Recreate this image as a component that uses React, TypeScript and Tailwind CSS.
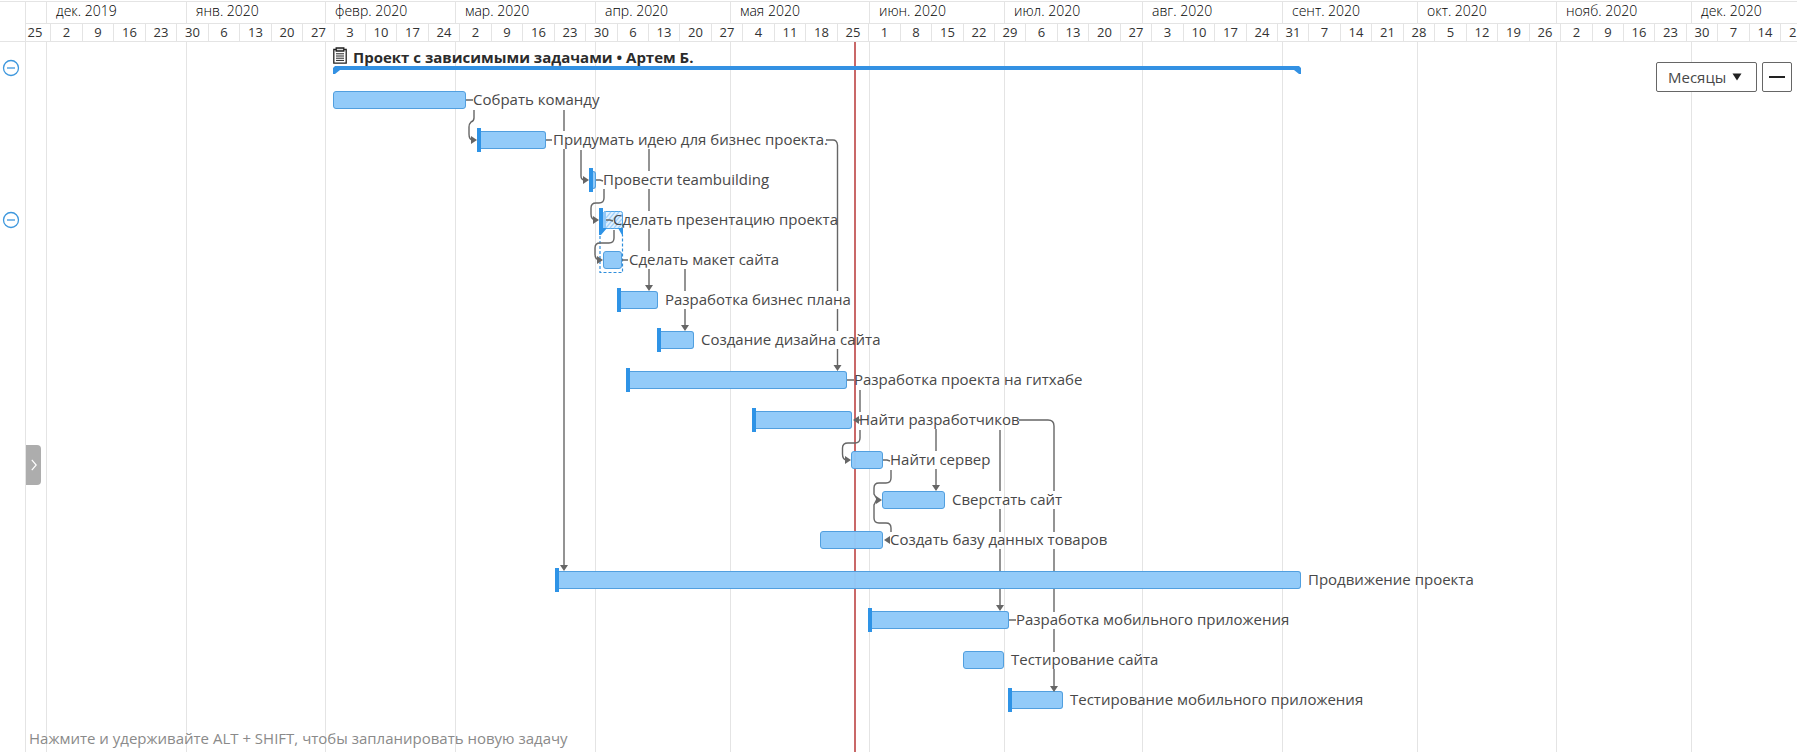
import React from "react";

type Month = { label: string; width: number };

const MONTHS: Month[] = [
  { label: "дек. 2019", width: 140 },
  { label: "янв. 2020", width: 139 },
  { label: "февр. 2020", width: 130 },
  { label: "мар. 2020", width: 140 },
  { label: "апр. 2020", width: 135 },
  { label: "мая 2020", width: 139 },
  { label: "июн. 2020", width: 135 },
  { label: "июл. 2020", width: 138 },
  { label: "авг. 2020", width: 140 },
  { label: "сент. 2020", width: 135 },
  { label: "окт. 2020", width: 139 },
  { label: "нояб. 2020", width: 135 },
  { label: "дек. 2020", width: 140 },
];

const WEEKS = [
  25, 2, 9, 16, 23, 30, 6, 13, 20, 27, 3, 10, 17, 24, 2, 9, 16, 23, 30, 6, 13, 20, 27, 4, 11, 18, 25, 1, 8,
  15, 22, 29, 6, 13, 20, 27, 3, 10, 17, 24, 31, 7, 14, 21, 28, 5, 12, 19, 26, 2, 9, 16, 23, 30, 7, 14, 21,
];
const WEEK_WIDTH = 31.45;
const weekWidth = (i: number) => Math.round((i + 1) * WEEK_WIDTH) - Math.round(i * WEEK_WIDTH);

type Task = { name: string; start: number; width: number; flag?: boolean; group?: boolean };

const TASKS: Task[] = [
  { name: "Собрать команду", start: 307, width: 133 },
  { name: "Придумать идею для бизнес проекта.", start: 451, width: 69, flag: true },
  { name: "Провести teambuilding", start: 563, width: 7, flag: true },
  { name: "Сделать презентацию проекта", start: 573, width: 24, flag: true, group: true },
  { name: "Сделать макет сайта", start: 577, width: 19 },
  { name: "Разработка бизнес плана", start: 591, width: 41, flag: true },
  { name: "Создание дизайна сайта", start: 631, width: 37, flag: true },
  { name: "Разработка проекта на гитхабе", start: 600, width: 221, flag: true },
  { name: "Найти разработчиков", start: 726, width: 100, flag: true },
  { name: "Найти сервер", start: 825, width: 32 },
  { name: "Сверстать сайт", start: 856, width: 63 },
  { name: "Создать базу данных товаров", start: 794, width: 63 },
  { name: "Продвижение проекта", start: 529, width: 746, flag: true },
  { name: "Разработка мобильного приложения", start: 842, width: 141, flag: true },
  { name: "Тестирование сайта", start: 937, width: 41 },
  { name: "Тестирование мобильного приложения", start: 982, width: 55, flag: true },
];

const LINKS = [
  "M466 100H473",
  "M474 110V118Q474 121 471 122Q469 124 469 127V134Q469 140 473 140",
  "M546 140H552",
  "M564 110V131M564 149V567",
  "M581 150V176Q581 180 585 180",
  "M596 180H600L603 181",
  "M604 189V198Q604 203 599 203H596Q591 203 591 208V214Q591 220 596 220",
  "M606 220H610L613 221",
  "M614 230V238Q614 243 609 243H600Q595 243 595 248V254Q595 260 600 260",
  "M622 260H628",
  "M649 149V171M649 189V211M649 229V251M649 269V286",
  "M685 269V291M685 309V326",
  "M826 140H833Q837 140 837.5 145V291M837.5 309V331M837.5 349V366",
  "M847 380H854",
  "M860 390V412M860 430V438Q860 443 855 443H848Q842.5 443 842.5 448V454Q842.5 460 847 460",
  "M857 420H861",
  "M1019 420H1048Q1054 420 1054 426V491M1054 509V532M1054 549V571M1054 589V612M1054 629V652M1054 669V687",
  "M936 429V451M936 469V486",
  "M1000 430V491M1000 509V532M1000 549V571M1000 589V606",
  "M883 460H887L890 461",
  "M891 470V478Q891 483 886 483H879Q874 483 874 488V494L877 499L874 505V518Q874 523 879 523H886Q891 523 891 528V532",
  "M887 540H890",
  "M1009 620H1016",
];

const ARROWS = [
  "M477 140L471 136V144Z",
  "M589 180L583 176V184Z",
  "M599 220L593 216V224Z",
  "M603 260L597 256V264Z",
  "M851 460L845 456V464Z",
  "M882 500L876 496V504Z",
  "M853 420L859 416V424Z",
  "M884 540L890 536V544Z",
  "M564 571L560 565H568Z",
  "M649 291L645 285H653Z",
  "M685 331L681 325H689Z",
  "M837.5 371L833.5 365H841.5Z",
  "M936 491L932 485H940Z",
  "M1000 611L996 605H1004Z",
  "M1054 692L1050 686H1058Z",
];

function Header() {
  return (
    <header className="mt-px flex h-[41px] border-b border-t border-[#e4e4e4] bg-white">
      <div className="w-[26px] shrink-0 border-r border-[#e4e4e4]" />
      <div className="min-w-0 flex-1 overflow-hidden">
        <div className="flex h-[22px] border-b border-[#e4e4e4]">
          <div className="w-5 shrink-0" />
          {MONTHS.map((m, i) => (
            <div
              key={i}
              className="shrink-0 whitespace-nowrap border-l border-[#e4e4e4] pl-[9px] text-sm font-light leading-[18px] text-black"
              style={{ width: m.width }}
            >
              {m.label}
            </div>
          ))}
        </div>
        <div className="-ml-[7px] flex h-[17px]">
          {WEEKS.map((d, i) => (
            <div
              key={i}
              className="shrink-0 border-l border-[#e4e4e4] text-center text-[13px] leading-4 text-[#333]"
              style={{ width: weekWidth(i) }}
            >
              {d}
            </div>
          ))}
        </div>
      </div>
    </header>
  );
}

function CollapseButton({ label }: { label: string }) {
  return (
    <button aria-label={label} className="block size-[18px]">
      <svg viewBox="0 0 18 18" className="size-[18px]" fill="none" stroke="#3d97dd" strokeWidth="1.3">
        <circle cx="9" cy="9" r="7.5" />
        <path d="M5 9H13" />
      </svg>
    </button>
  );
}

function ClipboardIcon() {
  return (
    <svg viewBox="0 0 14 17" className="h-[17px] w-3.5" fill="none" stroke="#222" strokeWidth="1.3">
      <path d="M3 2.5H.8V16.2H13.2V2.5H11" />
      <path d="M3.2 1H10.8V4H3.2Z" fill="#ddd" />
      <path d="M3 6.8H11M3 9H11M3 11.2H11M3 13.4H11" strokeWidth="1" />
    </svg>
  );
}

function TaskBar({ task }: { task: Task }) {
  return (
    <div className="flex h-6 shrink-0 items-center" style={{ marginLeft: task.start, width: task.width }}>
      {task.flag && <span className="h-6 w-1 shrink-0 bg-[#2e93e6]" />}
      {task.group ? (
        <svg viewBox="0 0 20 18" className="h-[18px] min-w-0 flex-1 overflow-visible">
          <rect x=".5" y=".5" width="19" height="17" rx="2" fill="#e2f1fe" stroke="#4ba2e6" />
          <path
            d="M3 7L8 1M3 12L12 1M3 17L16 1M7 17L19 3M11 17L19 8M15 17L19 13"
            stroke="#a4d2fa"
            strokeWidth="1.2"
          />
          <path d="M0 1H3V17H0Z" fill="#90c8f8" />
          <path d="M-4 17H4L-2 24H-4ZM20 17H15L19 24H20Z" fill="#2e93e6" />
          <path d="M-3 25V61.500H19.500V24" fill="none" stroke="#2e8edc" strokeWidth="1.2" strokeDasharray="3 2" />
        </svg>
      ) : (
        <span
          className={
            "h-[18px] min-w-0 flex-1 border border-[#519fdf] bg-[#8fc9f9]/97 " +
            (task.flag ? "rounded-r-[3px] border-l-0" : "rounded-[3px]")
          }
        />
      )}
    </div>
  );
}

function Toolbar() {
  return (
    <div className="absolute right-[5px] top-5 flex gap-[5px]">
      <div className="relative">
        <select
          aria-label="Масштаб"
          defaultValue="m"
          className="h-[30px] w-[101px] appearance-none rounded-xs border border-[#666] bg-white pl-[11px] text-[15px] text-[#484848]"
        >
          <option value="m">Месяцы</option>
        </select>
        <svg viewBox="0 0 10 8" className="pointer-events-none absolute right-[15px] top-[11px] h-2 w-2.5" fill="#222">
          <path d="M.5 .5H9.500L5 7.500Z" />
        </svg>
      </div>
      <button
        aria-label="Уменьшить"
        className="flex size-[30px] items-center justify-center rounded-xs border border-[#666] bg-white"
      >
        <span className="h-0.5 w-4 bg-[#222]" />
      </button>
    </div>
  );
}

export default function App() {
  return (
    <div className="flex min-h-screen flex-col overflow-hidden bg-white font-['Open_Sans','Noto_Sans',sans-serif]">
      <Header />
      <div className="flex flex-1">
        <aside className="flex w-[26px] shrink-0 flex-col gap-[134px] border-r border-[#e4e4e4] pl-0.5 pt-[17px]">
          <CollapseButton label="Свернуть проект" />
          <CollapseButton label="Свернуть задачу" />
        </aside>

        <main className="relative flex min-w-0 flex-1 flex-col overflow-hidden">
          <div className="pointer-events-none absolute inset-0 flex">
            <div className="w-5 shrink-0" />
            {MONTHS.map((m, i) => (
              <div key={i} className="shrink-0 border-l border-[#e4e4e4]" style={{ width: m.width }} />
            ))}
          </div>
          <div className="pointer-events-none absolute inset-y-0 left-[828px] w-0.5 bg-[#c96868]" />

          <div className="relative h-[38px] pl-[307px] pt-[5px]">
            <div className="flex h-[19px] items-start gap-1.5">
              <ClipboardIcon />
              <h1 className="whitespace-nowrap text-[15px] font-bold leading-5 text-[#2b2b2b]">
                Проект с зависимыми задачами • Артем Б.
              </h1>
            </div>
            <svg viewBox="0 0 968 8" className="h-2 w-[968px]" fill="#3391e3">
              <path d="M2 0H966L968 2V8H966L961 4H7L2 8H0V2Z" />
            </svg>
          </div>

          <ul className="relative">
            {TASKS.map((t) => (
              <li key={t.name} className="flex h-10 items-center">
                <TaskBar task={t} />
                <span
                  className={
                    "relative z-10 whitespace-nowrap pb-0.5 text-[15px] leading-5 text-[#484848] " +
                    (t.group ? "-ml-2.5" : "ml-[7px]")
                  }
                >
                  {t.name}
                </span>
              </li>
            ))}
          </ul>

          <svg className="pointer-events-none absolute inset-0 h-full w-full">
            <g transform="translate(-26 -42)">
              <path d={LINKS.join("")} fill="none" stroke="#666" strokeWidth="1.4" />
              <path d={ARROWS.join("")} fill="#666" />
            </g>
          </svg>

          <p className="relative mt-2 pl-[3px] text-[15px] leading-5 text-[#8a8a8a]">
            Нажмите и удерживайте ALT + SHIFT, чтобы запланировать новую задачу
          </p>

          <button
            aria-label="Открыть панель"
            className="absolute left-0 top-[403px] flex h-10 w-[15px] items-center justify-center rounded-r-sm bg-[#adadad]"
          >
            <svg viewBox="0 0 6 12" className="h-3 w-1.5" fill="none" stroke="#fff" strokeWidth="1.2">
              <path d="M.8 .8L5.200 6L.8 11.200" />
            </svg>
          </button>
          <Toolbar />
        </main>
      </div>
    </div>
  );
}
